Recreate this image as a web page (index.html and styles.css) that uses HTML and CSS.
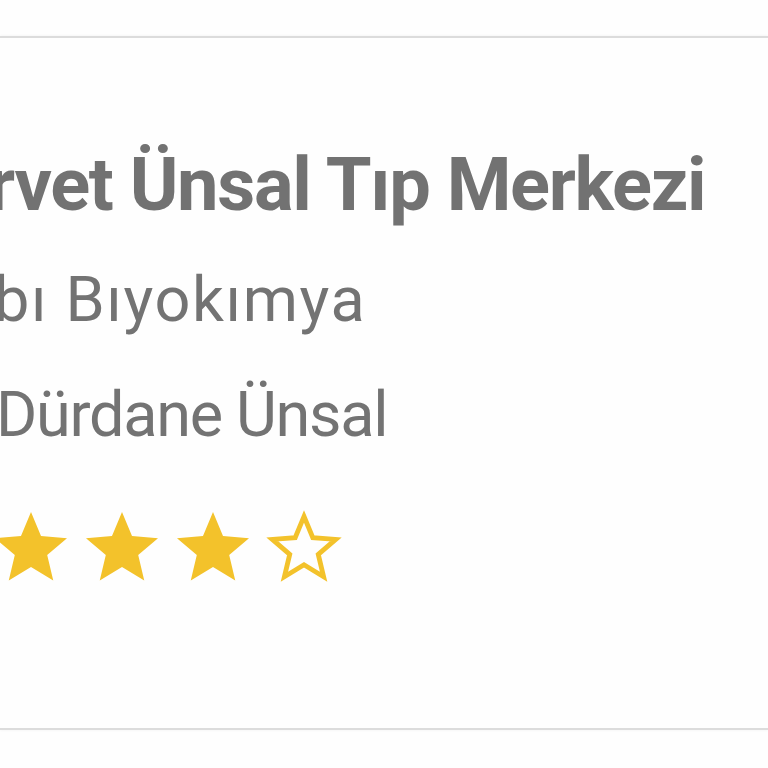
FILE: index.html
```html
<!DOCTYPE html>
<html lang="tr">
<head>
<meta charset="utf-8">
<link rel="stylesheet" href="styles.css">
</head>
<body>
<div class="card">
  <div class="info">
    <div class="title">rvet Ünsal Tıp Merkezi</div>
    <div class="line line-dept">bı Bıyokımya</div>
    <div class="line line-name">Dürdane Ünsal</div>
    <div class="stars">
      <svg class="star" viewBox="0 0 72 70"><polygon class="full" points="36,1 46.01,25.07 72,27.15 52.2,44.11 58.25,69.47 36,55.88 13.75,69.47 19.8,44.11 0,27.15 25.99,25.07"/></svg>
      <svg class="star" viewBox="0 0 72 70"><polygon class="full" points="36,1 46.01,25.07 72,27.15 52.2,44.11 58.25,69.47 36,55.88 13.75,69.47 19.8,44.11 0,27.15 25.99,25.07"/></svg>
      <svg class="star" viewBox="0 0 72 70"><polygon class="full" points="36,1 46.01,25.07 72,27.15 52.2,44.11 58.25,69.47 36,55.88 13.75,69.47 19.8,44.11 0,27.15 25.99,25.07"/></svg>
      <svg class="star" viewBox="0 0 72 70"><polygon class="empty" transform="translate(36 38) scale(0.88) translate(-36 -38)" points="36,1 46.01,25.07 72,27.15 52.2,44.11 58.25,69.47 36,55.88 13.75,69.47 19.8,44.11 0,27.15 25.99,25.07"/></svg>
    </div>
  </div>
</div>
</body>
</html>
```

FILE: styles.css
```css
html, body {
  margin: 0;
  padding: 0;
  background: #fefefe;
  overflow: hidden;
  width: 768px;
  height: 768px;
}

.card {
  margin-top: 36px;
  height: 690px;
  background: #fefefe;
  border-top: 2px solid #dcdcdc;
  border-bottom: 2px solid #dcdcdc;
  box-shadow: 0 0 3px rgba(0, 0, 0, 0.06);
}

.info {
  display: flex;
  flex-direction: column;
  padding-top: 89px;
  font-family: Roboto, "Noto Sans", sans-serif;
  white-space: nowrap;
}

.title {
  font-size: 74px;
  font-weight: 700;
  line-height: 115px;
  letter-spacing: -1.3px;
  color: #727272;
  margin-left: -12px;
}

.line {
  font-size: 63px;
  font-weight: 400;
  line-height: 115px;
  color: #737373;
  margin-left: -4px;
}

.line-dept {
  letter-spacing: 1.6px;
  margin-left: -6px;
}

.line-name {
  letter-spacing: -1.3px;
  margin-left: -4px;
}

.stars {
  display: flex;
  gap: 19px;
  margin-top: 39px;
  margin-left: -5px;
}

.star {
  width: 72px;
  height: 70px;
  overflow: visible;
}

.full {
  fill: #f3c22b;
}

.empty {
  fill: #fefefe;
  stroke: #f3c22b;
  stroke-width: 5.5;
  stroke-linejoin: miter;
}
```
